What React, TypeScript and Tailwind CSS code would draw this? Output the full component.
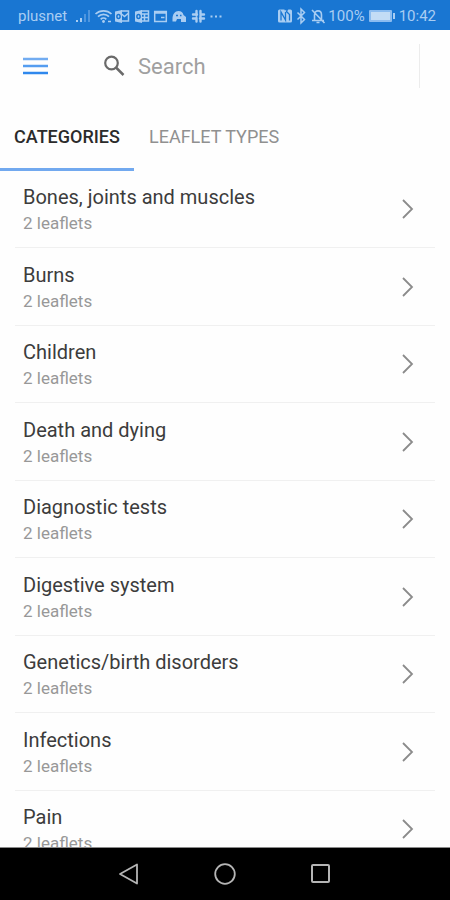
import React from 'react';

const categories = [
  'Bones, joints and muscles',
  'Burns',
  'Children',
  'Death and dying',
  'Diagnostic tests',
  'Digestive system',
  'Genetics/birth disorders',
  'Infections',
  'Pain',
];

function StatusIcons() {
  return (
    <svg className="shrink-0" width="150" height="18" viewBox="0 0 150 18" fill="none" stroke="#a9cdf2" aria-hidden="true">
      <g stroke="none">
        <path d="M1 13h2v2H1zM5 11h2v4H5z" fill="#a9cdf2" />
        <path d="M9 7h2v8H9zM13 3h2v12h-2z" fill="#4f96df" />
      </g>
      <path d="M20.500 7c4.500-4.300 11.500-4.300 16 0M23 9.700c3-3 8-3 11 0M25.700 12.300c1.500-1.500 4-1.500 5.600 0" strokeWidth="1.700" />
      <circle cx="28.500" cy="14.500" r="1.400" fill="#a9cdf2" stroke="none" />
      <path d="M33 14.500h3" strokeWidth="1.500" />
      <g strokeWidth="1.500">
        <path d="M46 4h7.500v10H46M46 6.500l3.500 3 4-3.500" />
        <path d="M40 4.500l7-1.500v13l-7-1.500z" fill="#a9cdf2" stroke="none" />
        <ellipse cx="43.500" cy="9.500" rx="1.600" ry="2" stroke="#1976d2" />
        <path d="M66 4h7.500v10H66M66 7h7M69.500 7v7M66 10.500h7" />
        <path d="M60 4.500l7-1.500v13l-7-1.500z" fill="#a9cdf2" stroke="none" />
        <ellipse cx="63.500" cy="9.500" rx="1.600" ry="2" stroke="#1976d2" />
      </g>
      <path d="M79.700 4.500h11.600v10H79.700zM79.700 6h11.600M86 10.500h3.500" strokeWidth="1.500" />
      <path d="M97.500 12c0-5 2.500-8 6-8 2.500 0 4.500 1.500 5 4l2.500 2v5h-5v-3h-4l-1 2.500h-3.500z" fill="#a9cdf2" stroke="none" />
      <path d="M101 8.500h2M105 8.500h1.500" stroke="#1976d2" strokeWidth="1.500" />
      <path d="M121.500 4v4.500M125.500 8V14.500M125.500 4v3M121.500 11v3.500M118 7.500h4M125.500 7.500h3.500M118 11.500h3.500M125 11.500h4" strokeWidth="2.400" strokeLinecap="round" />
      <path d="M135.500 9.500h2M140 9.500h2M144.500 9.500h2" strokeWidth="1.800" />
    </svg>
  );
}

function AlertIcons() {
  return (
    <svg className="shrink-0" width="48" height="18" viewBox="0 0 48 18" fill="none" stroke="#a9cdf2" aria-hidden="true">
      <rect x="0" y="2.500" width="14" height="13" rx="1.500" fill="#a9cdf2" stroke="none" />
      <path d="M3 13.500V5l4.500 8V5M6.500 2.500h3l-1 2 3 3v6" stroke="#1976d2" strokeWidth="1.300" />
      <path d="M19.500 5.500l7 7-3.500 3.500V2l3.500 3.500-7 7" strokeWidth="1.500" />
      <path d="M36.500 13V8c0-5.500 7-5.500 7 0v5M34 13.500h12M38.500 15.500h3M34 3l12.500 13" strokeWidth="1.600" />
    </svg>
  );
}

export default function App() {
  return (
    <div className="flex h-screen flex-col overflow-hidden bg-[#fefefe] font-['Roboto',sans-serif]">
      <header className="flex h-[30px] shrink-0 items-center bg-[#1976d2] pt-0.5 pr-3.5 pl-[18px] text-[15px] leading-5 text-[#a9cdf2]">
        <span className="mr-2">plusnet</span>
        <StatusIcons />
        <div className="ml-auto flex items-center">
          <AlertIcons />
          <span className="ml-0.5">100%</span>
          <svg className="ml-1 shrink-0" width="26" height="12" viewBox="0 0 26 12" aria-hidden="true">
            <rect x="0" y="0" width="23" height="12" rx="1" fill="#8bbcf0" />
            <rect x="2" y="2" width="19" height="8" fill="#c3dcf5" />
            <rect x="24" y="3" width="2" height="6" fill="#a9cdf2" />
          </svg>
          <span className="ml-1">10:42</span>
        </div>
      </header>

      <div className="flex h-[72px] shrink-0 items-center pr-[30px] pl-[23px]">
        <button type="button" aria-label="Open menu" className="shrink-0">
          <svg width="25" height="18" viewBox="0 0 25 18" strokeWidth="2.500" aria-hidden="true">
            <path d="M0 2h25" stroke="#72acf1" />
            <path d="M0 9h25" stroke="#559df0" />
            <path d="M0 16h25" stroke="#2f88ed" />
          </svg>
        </button>
        <label className="ml-[55px] flex min-w-0 flex-1 items-center gap-3">
          <svg className="shrink-0" width="23" height="22" viewBox="0 0 23 22" fill="none" stroke="#6a6a6a" aria-hidden="true">
            <circle cx="8.500" cy="8" r="6.300" strokeWidth="2.200" />
            <path d="M13 12.500l7.500 7.500" strokeWidth="2.500" />
          </svg>
          <input
            type="text"
            aria-label="Search"
            placeholder="Search"
            className="w-full min-w-0 bg-transparent pt-0.5 text-[22px] leading-7 text-[#333333] outline-none placeholder:text-[#a0a0a0]"
          />
        </label>
        <div className="h-11 w-px bg-[#ececec]" />
      </div>

      <div role="tablist" className="flex h-[69px] shrink-0 text-lg">
        <button type="button" role="tab" aria-selected="true" className="w-[134px] border-b-[3px] border-[#72a9ef] pt-[3px] text-center font-medium text-[#2b2b2b]">
          CATEGORIES
        </button>
        <button type="button" role="tab" aria-selected="false" className="border-b-[3px] border-transparent px-[15px] pt-[3px] text-[#909090]">
          LEAFLET TYPES
        </button>
      </div>

      <ul className="min-h-0 flex-1 overflow-hidden px-[15px]">
        {categories.map((name) => (
          <li key={name} className="border-b border-[#f0f0f0] odd:h-[77px] even:h-[78px]">
            <button type="button" className="flex size-full items-center justify-between pr-[21px] pl-2 text-left">
              <span className="flex flex-col">
                <span className="text-xl leading-7 text-[#3c3c3c]">{name}</span>
                <span className="text-[17px] leading-6 text-[#989898]">2 leaflets</span>
              </span>
              <svg width="12" height="20" viewBox="0 0 12 20" fill="none" stroke="#8b8b8b" strokeWidth="1.800" aria-hidden="true">
                <path d="M1 1l9 9-9 9" />
              </svg>
            </button>
          </li>
        ))}
      </ul>

      <nav aria-label="System" className="flex h-[53px] shrink-0 items-center justify-center gap-[74px] border-t border-[#8a8a8a] bg-black">
        <button type="button" aria-label="Back">
          <svg width="22" height="22" viewBox="0 0 22 22" fill="none" stroke="#b5b5b5" strokeWidth="1.800" strokeLinejoin="round" aria-hidden="true">
            <path d="M2 11L19 1.500v19z" />
          </svg>
        </button>
        <button type="button" aria-label="Home">
          <svg width="22" height="22" viewBox="0 0 22 22" fill="none" stroke="#b5b5b5" strokeWidth="1.800" aria-hidden="true">
            <circle cx="11" cy="11" r="9.800" />
          </svg>
        </button>
        <button type="button" aria-label="Recent apps">
          <svg width="22" height="22" viewBox="0 0 22 22" fill="none" stroke="#b5b5b5" strokeWidth="2" aria-hidden="true">
            <rect x="2" y="2" width="17" height="17" rx="1" />
          </svg>
        </button>
      </nav>
    </div>
  );
}
